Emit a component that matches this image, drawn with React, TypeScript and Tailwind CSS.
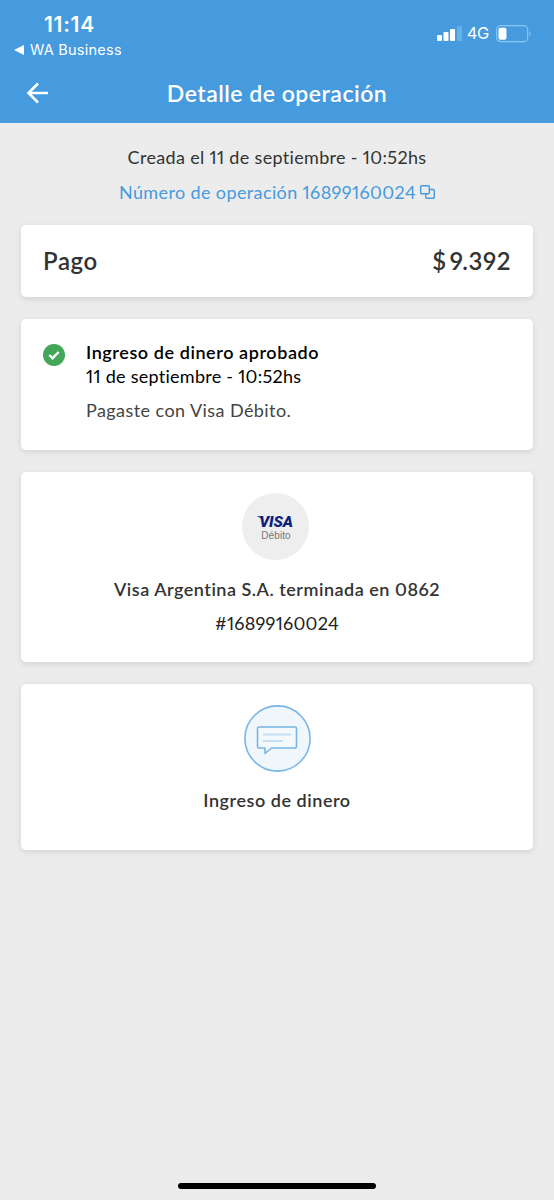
import type { ReactNode } from "react";

function StatusBar() {
  return (
    <div className="flex h-16 items-start justify-between pl-[14px] pr-[22px] font-['Inter',sans-serif]">
      <div className="pt-[12px]">
        <p className="pl-[30px] text-[21px] font-semibold leading-[26px] tracking-[0.7px]">11:14</p>
        <div className="flex items-center gap-[6px] pt-px">
          <svg width="10" height="10" viewBox="0 0 10 10" fill="currentColor" aria-hidden="true">
            <path d="M0 5 10 0v10z" />
          </svg>
          <span className="text-[14.5px] leading-[22px] tracking-[0.25px]">WA Business</span>
        </div>
      </div>
      <div className="flex items-center pt-[24px]">
        <svg className="-mt-px" width="25" height="16" viewBox="0 0 25 16" fill="currentColor" aria-hidden="true">
          <rect x="0" y="10" width="5" height="6" rx="1" />
          <rect x="6.5" y="7" width="5" height="9" rx="1" />
          <rect x="13" y="4" width="5" height="12" rx="1" />
          <rect x="20" y="1" width="5" height="15" rx="1" className="fill-[#63b3e6]" />
        </svg>
        <span className="ml-[5px] text-[16.5px] leading-[19px] tracking-[-0.3px]">4G</span>
        <svg className="ml-[7px]" width="36" height="18" viewBox="0 0 36 18" fill="none" aria-hidden="true">
          <rect x="0.7" y="0.7" width="31" height="16" rx="4" className="stroke-[#8ac6f0]" strokeWidth="1.2" />
          <rect x="2.5" y="2.7" width="8" height="12" rx="2" fill="white" />
          <path d="M33.5 6.5c1.6.6 1.6 4 0 4.6z" className="fill-[#8ac6f0]" />
        </svg>
      </div>
    </div>
  );
}

function Header() {
  return (
    <header className="h-[123px] bg-[#469ade] text-white">
      <StatusBar />
      <div className="grid h-[59px] grid-cols-[80px_1fr_80px] items-center">
        <button aria-label="Volver" className="pb-[2px] pl-[26px]">
          <svg width="24" height="22" viewBox="0 0 24 22" fill="none" stroke="currentColor" strokeWidth="2.6">
            <path d="M12 1.5 2.5 11l9.5 9.5M2.5 11H22" />
          </svg>
        </button>
        <h1 className="whitespace-nowrap text-center text-[23px] font-semibold tracking-[0.5px]">Detalle de operación</h1>
      </div>
    </header>
  );
}

function Card({ className, children }: { className: string; children: ReactNode }) {
  return (
    <section className={`rounded-[5px] bg-white shadow-[0_2px_6px_rgba(0,0,0,0.11)] ${className}`}>
      {children}
    </section>
  );
}

function VisaBadge() {
  return (
    <div className="mr-[4px] flex size-[67px] flex-col items-center rounded-full bg-[#eee] pt-[20px]">
      <span className="relative pl-[2px] font-['Roboto',sans-serif] text-[15.5px] font-black italic leading-[18px] tracking-[-0.1px] text-[#0c1f7c]">
        VISA
        <svg className="absolute left-0 top-[3px]" width="6" height="5" viewBox="0 0 6 5" fill="currentColor" aria-hidden="true">
          <path d="M0 .2h4.5L6 5C4.8 2.8 3 1.2 0 .6z" />
        </svg>
      </span>
      <span className="-mt-px pl-[2px] font-['Liberation_Sans',sans-serif] text-[10px] leading-[11px] tracking-[0.1px] text-[#777]">Débito</span>
    </div>
  );
}

export default function App() {
  return (
    <div className="flex h-[1200px] w-[554px] flex-col bg-[#ececec] font-['Lato',sans-serif] text-[#333]">
      <Header />

      <main className="flex-1 px-[21px] proportional-nums">
        <div className="flex h-[102px] flex-col items-center pt-[22px] text-[18px] leading-6">
          <p className="tracking-[0.33px]">Creada el 11 de septiembre - 10:52hs</p>
          <p className="mt-[11px] flex items-center gap-[4px] text-[#469ade]">
            <span className="tracking-[0.38px]">Número de operación 16899160024</span>
            <svg className="-mt-px" width="15" height="14" viewBox="0 0 15 14" fill="none" stroke="currentColor" strokeWidth="1.4" aria-hidden="true">
              <rect x="0.7" y="0.7" width="8.6" height="8" rx="1" />
              <path d="M9.3 4.5h4a1 1 0 0 1 1 1v6.8a1 1 0 0 1-1 1H6.800a1 1 0 0 1-1-1V8.700" />
            </svg>
          </p>
        </div>

        <div className="flex flex-col gap-[22px]">
          <Card className="flex h-[72px] items-center justify-between px-[22px] text-[24px] font-semibold">
            <span className="tracking-[0.6px]">Pago</span>
            <span className="flex gap-[3px] tracking-[0.6px]">
              <span>$</span>
              <span>9.392</span>
            </span>
          </Card>

          <Card className="flex h-[131px] gap-[21px] px-[22px] pt-[22px] text-[18px] leading-6 text-black">
            <svg className="mt-[3px]" width="22" height="22" viewBox="0 0 22 22" fill="none" aria-hidden="true">
              <circle cx="11" cy="11" r="11" className="fill-[#43a659]" />
              <path d="m6.3 11 3.2 3.2L15.7 8" stroke="white" strokeWidth="2.4" />
            </svg>
            <div className="-mt-px">
              <p className="font-semibold tracking-[0.58px]">Ingreso de dinero aprobado</p>
              <p className="tracking-[0.27px]">11 de septiembre - 10:52hs</p>
              <p className="mt-[10px] tracking-[0.43px] text-[#444]">Pagaste con Visa Débito.</p>
            </div>
          </Card>

          <Card className="flex h-[190px] flex-col items-center pt-[21px] text-[18px] leading-6">
            <VisaBadge />
            <p className="mt-[17px] font-semibold tracking-[0.51px]">Visa Argentina S.A. terminada en 0862</p>
            <p className="mt-[10px] tracking-[0.25px] text-[#222]">#16899160024</p>
          </Card>

          <Card className="flex h-[166px] flex-col items-center pt-[21px] text-[18px] leading-6">
            <svg width="67" height="67" viewBox="0 0 67 67" fill="none" aria-hidden="true">
              <circle cx="33.5" cy="33.5" r="32.6" className="fill-[#eff7fd] stroke-[#77b6e4]" strokeWidth="1.6" />
              <path
                d="M15 22h36a1.5 1.5 0 0 1 1.5 1.5v18A1.5 1.5 0 0 1 51 43H27.5L21 48.5V43h-6a1.5 1.5 0 0 1-1.5-1.5v-18A1.5 1.5 0 0 1 15 22z"
                className="fill-[#f3f9fd] stroke-[#77b6e4]"
                strokeWidth="1.6"
                strokeLinejoin="round"
              />
              <path d="M19 29.5h28M19 36h20" className="stroke-[#c3def3]" strokeWidth="2.2" />
            </svg>
            <p className="mt-[16px] font-semibold tracking-[0.54px]">Ingreso de dinero</p>
          </Card>
        </div>
      </main>

      <div className="flex h-[18px] justify-center">
        <div className="mt-px h-[6px] w-[198px] rounded-full bg-black" />
      </div>
    </div>
  );
}
